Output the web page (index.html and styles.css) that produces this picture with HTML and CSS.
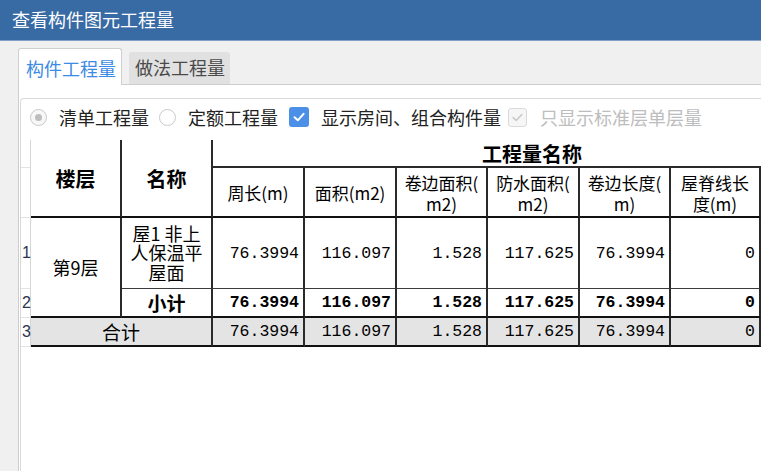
FILE: index.html
```html
<!DOCTYPE html>
<html lang="zh">
<head>
<meta charset="utf-8">
<title>查看构件图元工程量</title>
<link rel="stylesheet" href="styles.css">
</head>
<body>
<div class="window">
  <div class="titlebar">查看构件图元工程量</div>
  <div class="tabs">
    <div class="tab active">构件工程量</div>
    <div class="tab">做法工程量</div>
  </div>
  <div class="panel">
    <div class="inner">
      <div class="toolbar">
        <span class="radio checked"></span><span class="label l1">清单工程量</span>
        <span class="radio"></span><span class="label l2">定额工程量</span>
        <span class="check on"><svg viewBox="0 0 20 20" width="20" height="20"><path d="M5.5 10.2 L8.8 13.3 L14.6 6.8" fill="none" stroke="#fff" stroke-width="2" stroke-linecap="round" stroke-linejoin="round"/></svg></span><span class="label l3">显示房间、组合构件量</span>
        <span class="check disabled"><svg viewBox="0 0 19 19" width="19" height="19"><path d="M5.2 9.6 L8.2 12.5 L13.8 6.5" fill="none" stroke="#c9c9c9" stroke-width="1.6" stroke-linecap="round" stroke-linejoin="round"/></svg></span><span class="label muted">只显示标准层单层量</span>
      </div>
      <div class="grid">
        <table class="qty">
          <colgroup>
            <col class="w-rn"><col class="w91"><col class="w91"><col class="w92"><col class="w92"><col class="w91"><col class="w92"><col class="w91"><col class="w90"><col class="w92">
          </colgroup>
          <thead>
            <tr class="h1">
              <th class="rn"></th>
              <th rowspan="2" class="hb">楼层</th>
              <th rowspan="2" class="hb">名称</th>
              <th colspan="7" class="hb grp">工程量名称</th>
            </tr>
            <tr class="h2">
              <th class="rn"></th>
              <th>周长(m)</th>
              <th>面积(m2)</th>
              <th>卷边面积(<br>m2)</th>
              <th>防水面积(<br>m2)</th>
              <th>卷边长度(<br>m)</th>
              <th>屋脊线长<br>度(m)</th>
              <th></th>
            </tr>
          </thead>
          <tbody>
            <tr class="r1">
              <td class="rn">1</td>
              <td rowspan="2" class="floor">第9层</td>
              <td class="name">屋1 非上<br>人保温平<br>屋面</td>
              <td class="num">76.3994</td>
              <td class="num">116.097</td>
              <td class="num">1.528</td>
              <td class="num">117.625</td>
              <td class="num">76.3994</td>
              <td class="num">0</td>
              <td class="num"></td>
            </tr>
            <tr class="r2">
              <td class="rn">2</td>
              <td class="name sub">小计</td>
              <td class="num">76.3994</td>
              <td class="num">116.097</td>
              <td class="num">1.528</td>
              <td class="num">117.625</td>
              <td class="num">76.3994</td>
              <td class="num">0</td>
              <td class="num"></td>
            </tr>
            <tr class="r3">
              <td class="rn">3</td>
              <td colspan="2" class="name">合计</td>
              <td class="num">76.3994</td>
              <td class="num">116.097</td>
              <td class="num">1.528</td>
              <td class="num">117.625</td>
              <td class="num">76.3994</td>
              <td class="num">0</td>
              <td class="num"></td>
            </tr>
          </tbody>
        </table>
      </div>
    </div>
  </div>
</div>
</body>
</html>
```
FILE: styles.css
```css
* { box-sizing: border-box; }
html, body { margin: 0; padding: 0; }
body {
  width: 761px;
  height: 471px;
  overflow: hidden;
  background: #f0f0f0;
  font-family: "Noto Sans CJK SC", "Noto Sans", sans-serif;
}
.window { height: 471px; display: flex; flex-direction: column; }

.titlebar {
  flex: none;
  height: 41px;
  background: #386aa4;
  border-bottom: 1px solid #7f9fc8;
  color: #fff;
  font-size: 18px;
  line-height: 39px;
  padding-left: 12px;
}

.tabs {
  flex: none;
  display: flex;
  align-items: flex-end;
  gap: 7px;
  height: 37px;
  margin-top: 7px;
  margin-bottom: -1px;
  padding-left: 18px;
  position: relative;
  z-index: 1;
}
.tab {
  height: 32px;
  margin-bottom: 1px;
  padding: 0 5px 0 6px;
  background: #e1e1e1;
  border-radius: 3px 3px 0 0;
  color: #4a4a4a;
  font-size: 18px;
  line-height: 31px;
}
.tab.active {
  height: 37px;
  margin-bottom: 0;
  width: 104px;
  padding: 0 0 0 7px;
  background: #fff;
  border: 1px solid #cfcfcf;
  border-bottom: none;
  color: #3b8ae3;
  line-height: 38px;
}

.panel {
  flex: 1;
  margin-left: 18px;
  background: #fff;
  border-top: 1px solid #cdcdcd;
  border-left: 1px solid #cdcdcd;
  display: flex;
  flex-direction: column;
  min-height: 0;
}
.inner {
  flex: 1;
  margin-top: 13px;
  margin-left: 1px;
  border-top: 1px solid #d9d9d9;
  border-left: 1px solid #d9d9d9;
  border-top-left-radius: 4px;
  min-width: 0;
  overflow: hidden;
}

.toolbar {
  height: 36px;
  margin-bottom: 5px;
  padding-left: 9px;
  display: flex;
  align-items: center;
  font-size: 18px;
  color: #222;
  white-space: nowrap;
}
.radio {
  flex: none;
  width: 17px;
  height: 17px;
  border: 1px solid #c9c9c9;
  border-radius: 50%;
  background: #fff;
  margin-right: 12px;
  display: flex;
  align-items: center;
  justify-content: center;
}
.radio.checked { background: #f7f7f7; }
.radio.checked::after {
  content: "";
  width: 7px;
  height: 7px;
  border-radius: 50%;
  background: #bdbdbd;
}
.label { line-height: 20px; }
.l1 { margin-right: 10px; }
.l2 { margin-right: 11px; }
.l3 { margin-right: 7px; }
.check {
  flex: none;
  display: block;
  border-radius: 3px;
  margin-right: 12px;
}
.check svg { display: block; }
.check.on { width: 20px; height: 20px; background: #4b8fe6; }
.check.disabled {
  width: 19px;
  height: 19px;
  background: #f6f6f6;
  border: 1px solid #dadada;
  margin-right: 13px;
}
.check.disabled svg { margin: -1px; }
.muted { color: #bdbdbd; }

.grid { overflow: hidden; }
.qty {
  width: 832px;
  table-layout: fixed;
  border-collapse: separate;
  border-spacing: 0;
  font-family: "Noto Sans CJK SC", sans-serif;
  font-size: 17px;
  color: #000;
  white-space: nowrap;
}
.w-rn { width: 10px; }
.w90 { width: 90px; }
.w91 { width: 91px; }
.w92 { width: 92px; }

.qty th, .qty td {
  padding: 0;
  border-right: 2px solid #2a2a2a;
  text-align: center;
  vertical-align: middle;
  font-weight: normal;
  overflow: visible;
}
.qty th { line-height: 21px; }
.qty .hb { font-size: 20px; font-weight: 700; }
.qty .grp { border-bottom: 2px solid #2a2a2a; vertical-align: bottom; line-height: 24px; }
.h1 { height: 28px; }
.h2 { height: 50px; }
.h2 th, .h1 th[rowspan] { border-bottom: 2px solid #111; }
.h2 th { padding-top: 1px; }

.qty .rn {
  border-right: 1px solid #d6d6d6;
  border-bottom: 1px solid #e2e2e2;
  background: #fff;
  font-family: "Liberation Sans", sans-serif;
  font-size: 16px;
  color: #2b3550;
  text-align: left;
  padding-left: 1px;
}
.r1 { height: 71px; }
.r2 { height: 28px; }
.r3 { height: 29px; }
.r1 td { border-bottom: 1px solid #3a3a3a; }
.r1 td.floor, .r2 td { border-bottom: 2px solid #111; }
.r3 td { border-bottom: 2px solid #111; background: #e4e4e4; }
.r1 .name { line-height: 19.5px; font-size: 18px; }
.floor { font-size: 18px; }
.name { font-size: 18px; }
.name.sub { font-weight: 700; font-size: 19px; }
.r3 .name { font-size: 19px; }

.qty .num {
  text-align: right;
  padding-right: 4px;
  font-family: "Liberation Mono", monospace;
  font-size: 16.5px;
}
.r2 .num { font-weight: 700; }
```
